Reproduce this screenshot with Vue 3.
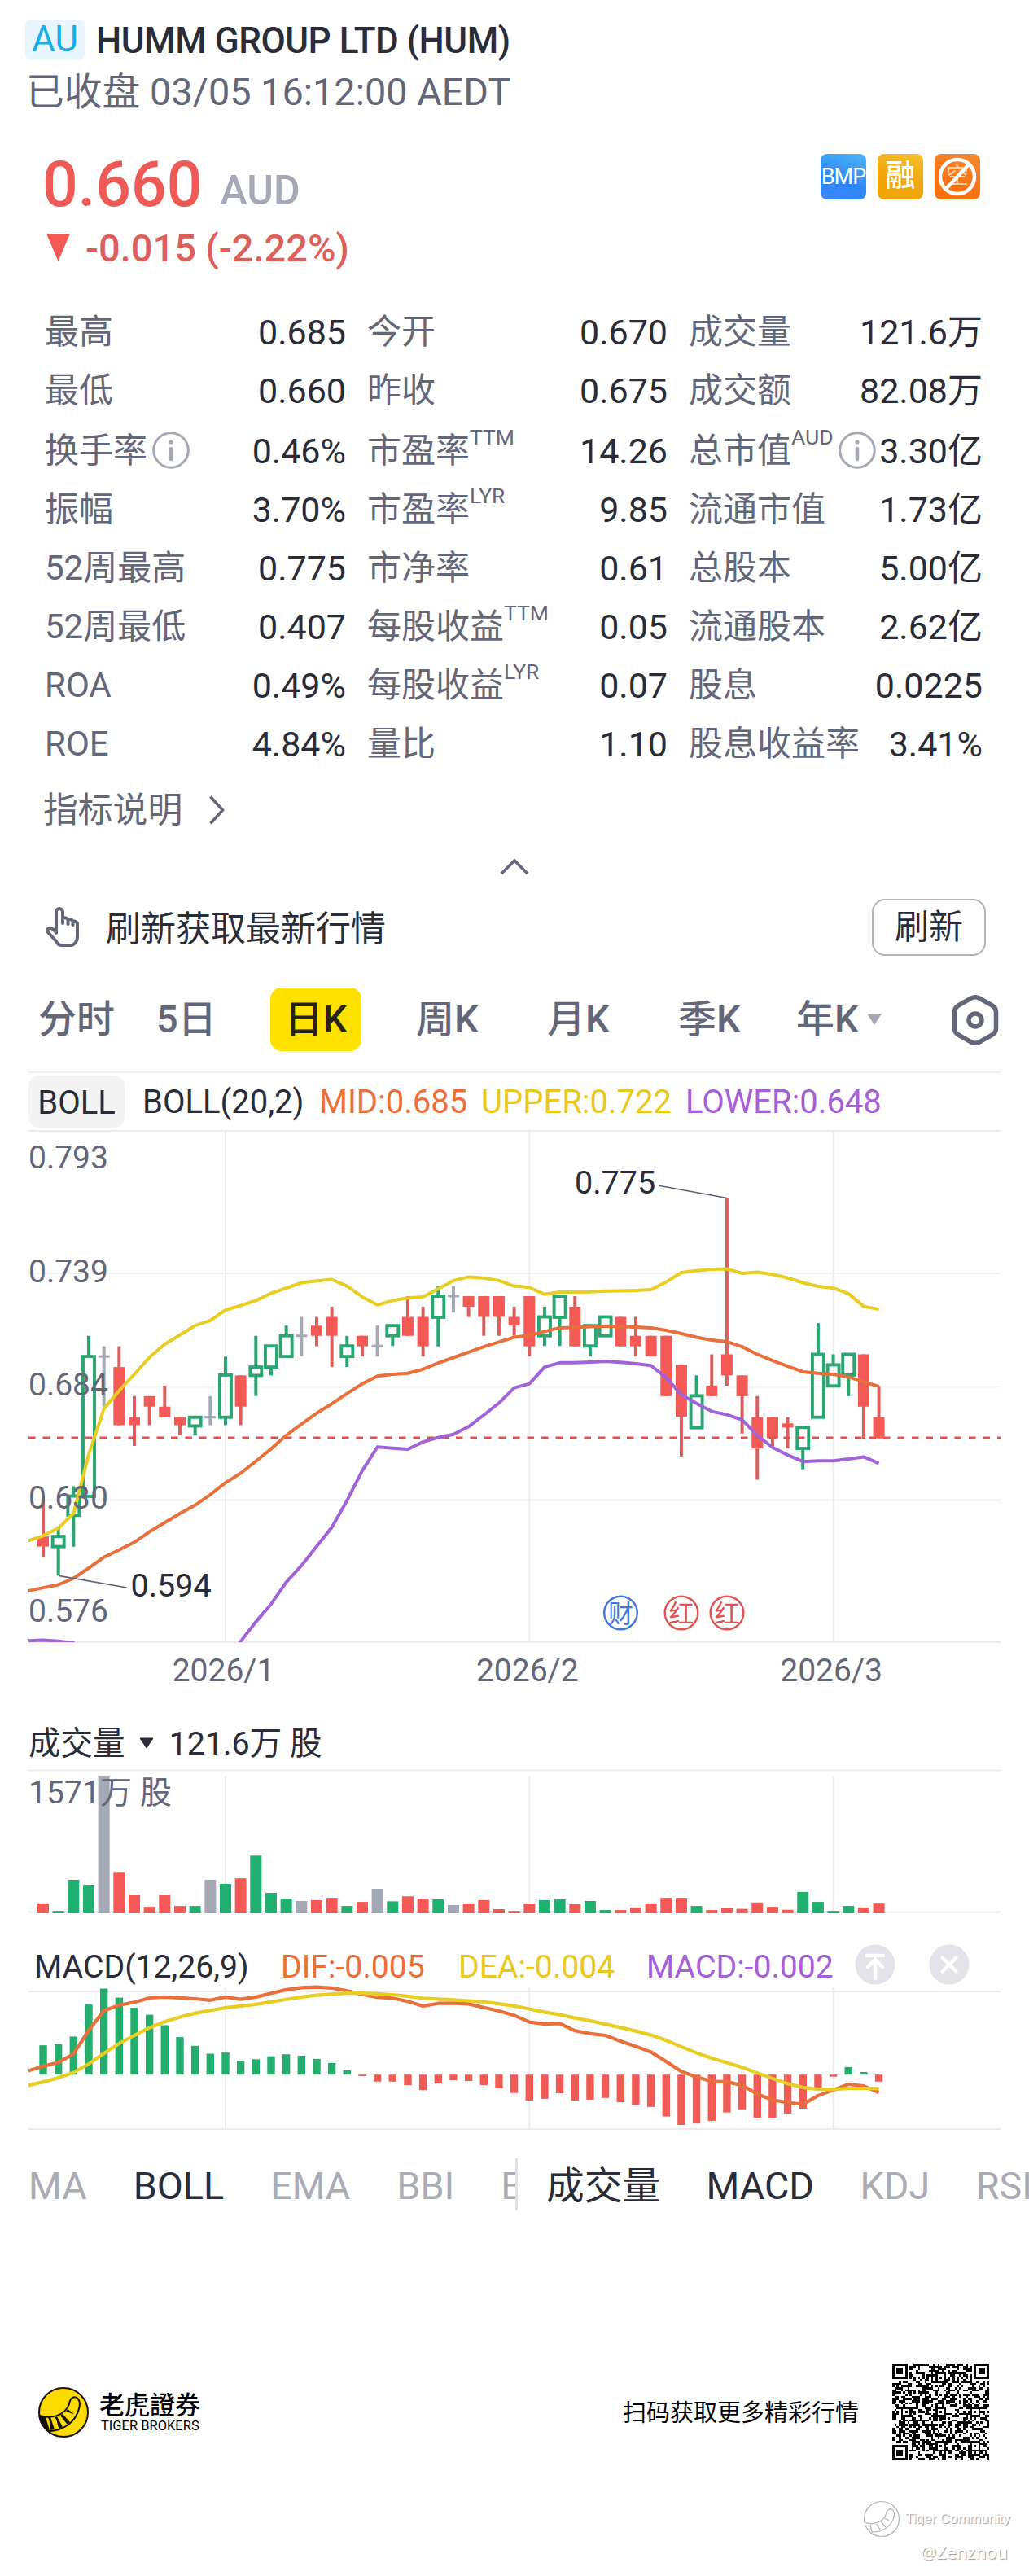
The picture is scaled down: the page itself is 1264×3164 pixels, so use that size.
<script setup>
const stats = [
  [['最高', '0.685'], ['今开', '0.670'], ['成交量', '121.6万']],
  [['最低', '0.660'], ['昨收', '0.675'], ['成交额', '82.08万']],
  [['换手率', '0.46%', '', true], ['市盈率', '14.26', 'TTM'], ['总市值', '3.30亿', 'AUD', true]],
  [['振幅', '3.70%'], ['市盈率', '9.85', 'LYR'], ['流通市值', '1.73亿']],
  [['52周最高', '0.775'], ['市净率', '0.61'], ['总股本', '5.00亿']],
  [['52周最低', '0.407'], ['每股收益', '0.05', 'TTM'], ['流通股本', '2.62亿']],
  [['ROA', '0.49%'], ['每股收益', '0.07', 'LYR'], ['股息', '0.0225']],
  [['ROE', '4.84%'], ['量比', '1.10'], ['股息收益率', '3.41%']],
]

const STEP = 18.665
const bx = (i) => 53 + STEP * i
const COLORS = { r: '#f45a55', g: '#28a870', n: '#a5a8b5' }
const months = [[12, '2026/1'], [32, '2026/2'], [52, '2026/3']]

/* kind, high, body top, body bottom, low */
const candles = `r 1025 1136 1164 1192|g 1108 1136 1164 1244|g 998 1025 1078 1164|g 584 641 1026 1026|n 613 641 641 779|r 613 670 830 830|r 750 808 830 887|r 750 750 779 830|r 721 779 808 808|r 808 808 830 858|g 808 808 832 858|n 750 808 808 830|g 641 692 808 830|r 693 693 779 830|g 584 670 693 750|g 612 612 670 693|g 556 584 641 641|n 532 584 584 641|r 532 556 584 613|r 504 532 584 670|g 584 612 641 670|r 584 584 613 641|n 556 612 612 641|g 556 556 584 612|r 475 532 584 584|r 504 532 613 641|g 447 475 533 613|n 447 475 475 520|r 475 475 504 532|r 475 475 532 584|r 475 475 532 584|r 504 532 556 584|r 475 475 613 641|g 504 532 584 612|g 475 475 533 612|r 475 504 613 613|g 556 556 612 641|g 532 532 584 584|r 532 532 613 613|r 532 584 613 641|r 584 584 641 641|r 584 584 750 750|r 664 664 807 916|g 693 749 837 837|r 635 721 750 750|r 205 635 693 721|r 693 693 750 853|r 750 808 894 980|r 808 808 866 888|r 808 825 836 894|g 836 836 894 951|g 549 635 808 808|g 635 664 722 722|g 635 635 692 750|r 635 635 779 867|r 722 808 866 866`
  .split('|')
  .map((row, i) => {
    const [k, ...v] = row.split(' ')
    const [h, t, b, l] = v.map((n) => 1380 + n / 2.24)
    return { k, h, t, b, l, x: bx(i), c: COLORS[k] }
  })

const line = (values, top, scale) =>
  values.split(' ').map((v, i) => `${bx(i - 1).toFixed(1)},${(top + v / scale).toFixed(1)}`).join(' ')

const upper = line('1148 1134 1113 1073 910 785 735 690 643 607 582 556 542 513 501 487 467 453 438 433 429 447 477 499 487 480 477 455 432 422 425 432 447 451 470 464 464 463 461 460 459 457 436 410 405 401 400 412 409 415 425 438 448 453 468 503 511', 1380, 2.24)
const mid = line('1286 1277 1269 1251 1223 1193 1173 1152 1123 1098 1073 1050 1021 988 962 929 895 858 827 797 771 743 716 695 690 687 676 659 644 629 614 601 588 583 572 562 561 559 557 559 560 562 569 578 588 596 600 614 635 652 668 683 687 690 697 711 723', 1380, 2.24)
const lower = line('1423 1421 1424 1429 1460 1520 1560 1600 1620 1630 1630 1610 1560 1480 1425 1371 1322 1262 1216 1163 1111 1037 955 890 893 896 876 864 855 834 802 769 727 716 670 658 658 656 654 657 661 666 699 746 770 792 801 815 858 891 912 930 928 928 923 917 935', 1380, 2.24)
const dif = line('1270 1254 1241 1212 1130 1063 1044 1034 1019 1016 1019 1022 1027 1016 1024 1016 1003 991 984 982 985 995 1007 1017 1020 1031 1047 1038 1037 1040 1052 1064 1079 1102 1109 1107 1132 1142 1148 1168 1186 1205 1238 1272 1291 1306 1308 1319 1350 1370 1379 1385 1355 1336 1316 1322 1344', 2090, 2.8)
const dea = line('1320 1308 1294 1276 1246 1210 1176 1148 1122 1101 1085 1072 1062 1053 1047 1041 1033 1024 1016 1010 1006 1003 1003 1005 1008 1013 1020 1023 1026 1029 1033 1039 1047 1057 1068 1077 1088 1098 1109 1121 1133 1147 1165 1187 1208 1226 1242 1258 1277 1296 1314 1327 1333 1334 1330 1330 1331', 2090, 2.8)

const volumes = '694 720 613 630 258 586 665 706 665 703 703 613 627 608 530 658 678 686 683 675 703 689 644 687 670 678 680 700 694 683 714 720 695 683 680 697 686 717 717 708 694 675 675 703 717 711 713 691 706 716 655 689 720 703 708 692'
  .split(' ')
  .map((v, i) => ({ x: bx(i) - 7, y: 2090 + v / 2.8, h: (728 - v) / 2.8, c: candles[i].k === 'g' ? '#20b06f' : candles[i].c }))

const hist = '1182 1178 1152 1042 987 1018 1053 1077 1113 1154 1184 1211 1207 1235 1230 1220 1213 1218 1229 1243 1268 1288 1307 1307 1319 1336 1313 1302 1305 1319 1330 1346 1372 1366 1347 1372 1369 1363 1378 1386 1394 1427 1456 1451 1442 1413 1405 1431 1431 1417 1400 1327 1290 1257 1274 1307'
  .split(' ')
  .map((v, i) => {
    const up = v < 1283
    return { x: bx(i) - 4.7, y: 2090 + Math.min(v, 1283) / 2.8, h: Math.abs(v - 1283) / 2.8, c: up ? '#24ae6e' : '#f05b56' }
  })

/* QR grid: finder, alignment and timing patterns around the data cells */
const N = 45
const cells = []
let seed = 90210
const rand = () => {
  seed = (seed * 1103515245 + 12345) % 2147483648
  return seed / 2147483648
}
const ring = (r, c, cr, cc) => Math.max(Math.abs(r - cr), Math.abs(c - cc))
for (let r = 0; r < N; r++) {
  for (let c = 0; c < N; c++) {
    let on = rand() < 0.52
    if (r === 6 || c === 6) on = (r + c) % 2 === 0
    for (const [ar, ac] of [[6, 22], [22, 6], [22, 22], [22, 38], [38, 22], [38, 38]]) {
      const d = ring(r, c, ar, ac)
      if (d <= 2) on = d !== 1
    }
    for (const [fr, fc] of [[3, 3], [3, 41], [41, 3]]) {
      const d = ring(r, c, fr, fc)
      if (d <= 4) on = d !== 2 && d !== 4
    }
    if (on) cells.push(`M${c} ${r}h1v1h-1z`)
  }
}
const qr = cells.join('')
</script>

<template>
  <main class="page">
    <header class="head">
      <div class="name"><span class="region">AU</span><b>HUMM GROUP LTD (HUM)</b></div>
      <div class="time">已收盘 03/05 16:12:00 AEDT</div>
    </header>

    <section class="quote">
      <div class="price-row">
        <span class="price">0.660</span><span class="cur">AUD</span>
        <div class="tags">
          <span class="tag bmp">BMP</span>
          <span class="tag margin">融</span>
          <span class="tag short">空
            <svg viewBox="0 0 56 56"><circle cx="28" cy="28" r="21" /><path d="M14 43L42 13" /></svg>
          </span>
        </div>
      </div>
      <div class="change">
        <svg width="29" height="34" viewBox="0 0 29 34"><path d="M0 0H29L14.5 34Z" fill="#f45a55" /></svg>
        <span>-0.015 (-2.22%)</span>
      </div>
    </section>

    <section class="stats">
      <div v-for="(row, r) in stats" :key="r" class="srow" :class="{ gap: r === 2 }">
        <div v-for="(s, c) in row" :key="c" class="stat">
          <span class="lab">{{ s[0] }}</span><sup v-if="s[2]">{{ s[2] }}</sup>
          <svg v-if="s[3]" class="info" width="46" height="46" viewBox="0 0 46 46">
            <circle cx="23" cy="23" r="21.3" fill="none" stroke="#a5a8b5" stroke-width="3" />
            <circle cx="23" cy="13" r="2.6" fill="#a5a8b5" />
            <path d="M23 21V34" stroke="#a5a8b5" stroke-width="4.5" stroke-linecap="round" />
          </svg>
          <span class="val">{{ s[1] }}</span>
        </div>
      </div>
    </section>

    <div class="explain">
      <span>指标说明</span>
      <svg width="21" height="38" viewBox="0 0 21 38"><path d="M2.5 2.5L17.5 19L2.5 35.5" /></svg>
    </div>
    <div class="fold"><svg width="38" height="22" viewBox="0 0 38 22"><path d="M3 19L19 3L35 19" /></svg></div>

    <div class="refresh">
      <svg width="44" height="52" viewBox="0 0 44 52">
        <path d="M14 33V7a4 4 0 0 1 8 0V21M22 14.500c4-1 6.500.5 6.500 3V22M28.500 16.500c4-1 6 .5 6 3V23M34.500 18.500c3.500-.5 5.500 1 5.500 4V37c0 7-4 11-8 11H20c-3 0-5-2.500-6-5L3.500 31.500c-1-3 1.500-5.500 4.500-4.500 2.500 1 4 3 6 5.500" />
      </svg>
      <span>刷新获取最新行情</span>
      <button>刷新</button>
    </div>

    <nav class="periods">
      <span class="p1">分时</span><span class="p2">5日</span><span class="p3">日K</span><span class="p4">周K</span><span class="p5">月K</span><span class="p6">季K</span><span class="p7">年K</span>
      <svg class="drop" width="20" height="14" viewBox="0 0 20 14"><path d="M1 0H19L10 14Z" fill="#a5a8b5" /></svg>
      <svg class="hex" width="58" height="62" viewBox="0 0 58 62">
        <path d="M24 4Q29 1.500 34 4L49 12.500Q54.500 15.500 54.500 21V41Q54.500 46.500 49 49.500L34 58Q29 60.500 24 58L9 49.500Q3.500 46.500 3.500 41V21Q3.500 15.500 9 12.500Z" />
        <circle cx="29" cy="31" r="8" />
      </svg>
    </nav>

    <div class="boll">
      <span class="chip">BOLL</span><span class="bp">BOLL(20,2)</span><span class="o">MID:0.685</span><span class="y">UPPER:0.722</span><span class="v">LOWER:0.648</span>
    </div>

    <svg class="chart" width="1264" height="719" viewBox="0 1387 1264 719">
      <defs>
        <clipPath id="plot"><rect x="35" y="1389" width="1194" height="628" /></clipPath>
      </defs>
      <g class="grid">
        <path d="M35 1389H1229M35 2017H1229" stroke-width="2" />
        <path d="M35 1564H1229M35 1703.500H1229M35 1842.500H1229" stroke-width="1.300" />
        <path v-for="m in months" :key="m[0]" :d="`M${bx(m[0])} 1389V2017`" stroke-width="1.600" />
      </g>
      <g v-for="(k, i) in candles" :key="i">
        <template v-if="k.k === 'g'">
          <path :d="`M${k.x} ${k.h}V${k.t}M${k.x} ${k.b}V${k.l}`" :stroke="k.c" stroke-width="4" />
          <rect :x="k.x - 7" :y="k.t" width="14" :height="k.b - k.t" fill="none" :stroke="k.c" stroke-width="3.900" />
        </template>
        <template v-else>
          <path :d="`M${k.x} ${k.h}V${k.l}`" :stroke="k.k === 'r' ? '#d9605f' : k.c" stroke-width="4" />
          <rect :x="k.x - 7" :y="k.k === 'n' ? k.t - 1.500 : k.t" width="14" :height="k.k === 'n' ? 3 : k.b - k.t" :fill="k.c" />
        </template>
      </g>
      <path d="M35 1766.200H1229" stroke="#e05252" stroke-width="3.400" stroke-dasharray="8.500 9" />
      <g clip-path="url(#plot)" fill="none" stroke-width="4" stroke-linejoin="round">
        <polyline :points="mid" stroke="#e9703a" />
        <polyline :points="upper" stroke="#e8cd22" />
        <polyline :points="lower" stroke="#a063d8" />
      </g>
      <path d="M72 1935.400L155.500 1950M809.300 1456.300L893 1471.500" stroke="#5f6272" stroke-width="1.600" />
      <g class="axis">
        <text x="35" y="1435">0.793</text>
        <text x="35" y="1574.500">0.739</text>
        <text x="35" y="1713.500">0.684</text>
        <text x="35" y="1853">0.630</text>
        <text x="35" y="1992">0.576</text>
        <text v-for="m in months" :key="m[1]" :x="bx(m[0]) - 2.500" y="2065" text-anchor="middle">{{ m[1] }}</text>
      </g>
      <text class="mark" x="160.500" y="1961">0.594</text>
      <text class="mark" x="706" y="1466">0.775</text>
      <g class="event" fill="#4478d6" stroke="#4478d6"><circle cx="762.500" cy="1981" r="20.300" /><text x="762.500" y="1992.500">财</text></g>
      <g v-for="x in [837, 893]" :key="x" class="event" fill="#de5454" stroke="#de5454"><circle :cx="x" cy="1981" r="20.300" /><text :x="x" y="1992.500">红</text></g>
    </svg>

    <div class="vol-head">
      <span>成交量</span><svg width="18" height="14" viewBox="0 0 18 14"><path d="M1 1H17L9 13Z" fill="#2a2c37" stroke="#2a2c37" stroke-linejoin="round" /></svg><span>121.6万 股</span>
    </div>
    <svg class="chart" width="1264" height="182" viewBox="0 2172 1264 182">
      <g class="grid">
        <path d="M35 2174.500H1229" stroke-width="1.500" />
        <path d="M35 2348.500H1229" stroke-width="2" />
        <path v-for="m in months" :key="m[0]" :d="`M${bx(m[0])} 2182V2350`" stroke-width="1.600" />
      </g>
      <rect v-for="(b, i) in volumes" :key="i" :x="b.x" :y="b.y" width="14" :height="b.h" :fill="b.c" />
      <text class="axis" x="35" y="2214.500" textLength="176">1571万 股</text>
    </svg>

    <div class="macd-head">
      <span class="m1">MACD(12,26,9)</span><span class="m2 o">DIF:-0.005</span><span class="m3 y">DEA:-0.004</span><span class="m4 v">MACD:-0.002</span>
      <svg class="c1" width="50" height="50" viewBox="0 0 50 50"><circle cx="25" cy="25" r="24.500" fill="#e3e3e9" /><path d="M15 14H35M25 42V19M16 28L25 19L34 28" /></svg>
      <svg class="c2" width="50" height="50" viewBox="0 0 50 50"><circle cx="25" cy="25" r="24.500" fill="#e3e3e9" /><path d="M16.500 16.500L33.500 33.500M33.500 16.500L16.500 33.500" /></svg>
    </div>
    <svg class="chart" width="1264" height="182" viewBox="0 2438 1264 182">
      <defs><clipPath id="osc"><rect x="35" y="2438" width="1194" height="180" /></clipPath></defs>
      <g class="grid">
        <path d="M35 2446H1229M35 2615H1229" stroke-width="2" />
        <path v-for="m in months" :key="m[0]" :d="`M${bx(m[0])} 2441.500V2615`" stroke-width="1.600" />
      </g>
      <rect v-for="(b, i) in hist" :key="i" :x="b.x" :y="b.y" width="9.400" :height="b.h" :fill="b.c" />
      <g clip-path="url(#osc)" fill="none" stroke-width="4.200" stroke-linejoin="round">
        <polyline :points="dif" stroke="#e9703a" />
        <polyline :points="dea" stroke="#e8cd22" />
      </g>
    </svg>

    <nav class="inds">
      <div class="left"><span>MA</span><span class="on">BOLL</span><span>EMA</span><span>BBI</span><span>E</span></div>
      <div class="right"><span class="on">成交量</span><span class="on">MACD</span><span>KDJ</span><span>RSI</span></div>
    </nav>

    <footer class="foot">
      <svg width="64" height="64" viewBox="0 0 64 64">
        <circle cx="32" cy="32" r="30" fill="#fcdc00" stroke="#15110a" stroke-width="2" />
        <path d="M2.500 36C16 40 33 37 39 22C40 13 46 12 49 14.500C56 21 49 39 38 47C30 53 21 55 14 55C6 49 3 43 2.500 36Z" fill="#fcdc00" stroke="#15110a" stroke-width="2" stroke-linejoin="round" />
        <path d="M3 36L10 38L15 54L12 53C6 48 3 43 3 36ZM16 38L21 53L16 54C14 48 16 44 13 38ZM24 37L31 50L27 52C24 48 25 42 21 38ZM31 34L40 44L37 47C33 43 31 39 28 36ZM37 28L45 34C41 34 38 31 35 31Z" fill="#15110a" />
      </svg>
      <div class="brand"><b>老虎證券</b><span>TIGER BROKERS</span></div>
      <span class="scan">扫码获取更多精彩行情</span>
      <svg class="qr" width="119" height="119" viewBox="0 0 45 45" shape-rendering="crispEdges"><path :d="qr" /></svg>
    </footer>

    <div class="wm">
      <svg width="46" height="46" viewBox="0 0 46 46" fill="none" stroke="#b4b4b4" stroke-width="1.200">
        <circle cx="23" cy="23" r="21.500" />
        <path d="M2 27C12 31 25 27 28 18C29 11 34 9 37 12C41 18 36 30 27 35C22 38 17 39 11 39L9 30M17 29L21 36M22 26L28 33M27 22L32 25" />
      </svg>
      <span>Tiger Community</span>
    </div>
    <div class="user">@Zenzhou</div>
  </main>
</template>

<style>
body { background: #fefefe; }
</style>

<style scoped>
.page { width: 1264px; height: 3164px; overflow: hidden; box-sizing: border-box; background: #fefefe; font-family: Roboto, "Noto Sans CJK SC", sans-serif; color: #2a2c37; white-space: nowrap; display: flex; flex-direction: column; }
.page > * { flex: none; }
.page svg { display: block; flex: none; }
.head { height: 185px; padding: 24px 0 0 31px; box-sizing: border-box; }
.name { display: flex; align-items: center; height: 49px; font-size: 44px; }
.name b { font-weight: 500; margin: 4px 0 0 14px; line-height: 49px; letter-spacing: -0.45px; }
.region { width: 73px; height: 49px; line-height: 48px; border-radius: 7px; background: #e8f6fd; color: #19aee8; text-align: center; }
.time { height: 60px; line-height: 60px; margin: 10px 0 0 1px; font-size: 46.800px; color: #646778; }
.quote { padding: 4px 60px 0 52px; height: 187px; box-sizing: border-box; }
.price-row { display: flex; height: 76px; }
.price { font-size: 77px; font-weight: 500; line-height: 77px; color: #ee5a56; }
.cur { font-size: 50px; line-height: 77px; margin: 7px 0 0 22px; color: #a5a8b5; font-weight: 500; }
.tags { margin-left: auto; display: flex; gap: 14px; }
.tag { width: 56px; height: 56px; border-radius: 8px; color: #fff; text-align: center; line-height: 56px; box-sizing: border-box; font-weight: 500; }
.bmp { background: linear-gradient(20deg, #3d86ff, #2e86f6 40%, #4cb6f9); font-size: 27px; letter-spacing: -1px; font-weight: 400; }
.margin { background: linear-gradient(20deg, #f0a400, #f0a812 50%, #f5c22c); font-size: 37px; }
.short { background: linear-gradient(200deg, #f28a34, #f97316 60%, #fb6f0a); font-size: 28px; color: #ffd0a4; position: relative; font-weight: 400; }
.short svg { position: absolute; inset: 0; fill: none; stroke: #fff; stroke-width: 4.500; }
.change { height: 60px; margin: 10px 0 0 5px; display: flex; align-items: center; font-size: 47px; font-weight: 500; color: #dd5f5b; gap: 19px; line-height: 60px; }
.change svg { margin-top: -3px; }
.stats { font-size: 43px; }
.srow { display: grid; grid-template-columns: 370px 369px 361px; column-gap: 26px; height: 72px; padding-left: 55px; }
.srow.gap { margin-top: 2px; }
.stat { display: flex; align-items: center; line-height: 72px; }
.lab { color: #646778; font-size: 42px; }
.stat sup { font-size: 26.500px; color: #646778; line-height: 30px; align-self: flex-start; margin-top: 4px; vertical-align: baseline; }
.info { margin-left: 6px; margin-top: -2px; }
.val { margin-left: auto; }
.explain { height: 60px; margin: 15px 0 0 53px; display: flex; align-items: center; font-size: 42.800px; line-height: 60px; color: #646778; gap: 32px; }
.explain svg, .fold svg { fill: none; stroke: #646778; stroke-width: 3.600; }
.fold { display: flex; justify-content: center; margin-top: 29px; height: 50px; }
.refresh { height: 70px; display: flex; align-items: center; padding: 0 53px 0 55px; font-size: 43px; line-height: 70px; }
.refresh svg { fill: none; stroke: #646778; stroke-width: 4; stroke-linecap: round; stroke-linejoin: round; }
.refresh span { margin: 3px 0 0 31px; }
.refresh button { margin-left: auto; width: 140px; height: 70px; box-sizing: border-box; border: 2px solid #b4b4b6; border-radius: 16px; background: none; font: inherit; font-size: 42px; line-height: 64px; color: inherit; padding: 0; }
.periods { display: flex; align-items: center; height: 78px; margin-top: 39px; padding-left: 47px; font-size: 47px; font-weight: 500; color: #646778; line-height: 78px; }
.periods span { flex: none; }
.p1 { width: 145px; }
.p2 { width: 140px; }
.p3 { width: 112px; height: 78px; background: #ffe100; border-radius: 14px; color: #25231a; text-align: center; }
.p4 { width: 161px; margin-left: 67px; }
.p5 { width: 161px; }
.p6 { width: 145px; }
.p7 { width: 86px; }
.hex { margin-left: 85px; margin-top: 2px; fill: none; stroke: #646778; stroke-width: 5.500; }
.boll { display: flex; align-items: center; margin: 25px 0 0 35px; width: 1194px; height: 71px; box-sizing: border-box; border-top: 2px solid #f0f0f2; font-size: 40px; line-height: 72px; }
.boll > span { padding-top: 2px; box-sizing: border-box; }
.chip { width: 118px; height: 64px; line-height: 64px; background: #f4f4f5; border-radius: 13px; text-align: center; }
.bp { width: 217px; margin-left: 22px; }
.boll .o { width: 199px; }
.boll .y { width: 251px; }
.o { color: #ea7038; }
.y { color: #e9c91e; }
.v { color: #a560d8; }
.grid { stroke: #ebebed; fill: none; }
.axis { font-size: 39px; fill: #646778; }
.mark { font-size: 39.500px; fill: #2a2c37; }
.event circle { fill: none; stroke-width: 2.400; }
.event text { font-size: 31px; text-anchor: middle; stroke: none; }
.vol-head { display: flex; align-items: center; height: 66px; padding: 6px 0 0 35px; box-sizing: border-box; font-size: 39.500px; line-height: 60px; }
.vol-head svg { margin: -3px 19px 0 17px; }
.macd-head { display: flex; align-items: center; height: 54px; margin-top: 30px; padding: 10px 0 0 42px; box-sizing: border-box; font-size: 39.200px; line-height: 44px; }
.m1 { width: 303px; }
.m2 { width: 218px; }
.m3 { width: 231px; }
.m4 { width: 256px; }
.macd-head path { fill: none; stroke: #fff; stroke-width: 4.500; stroke-linecap: round; }
.macd-head svg { margin-top: -6px; }
.c2 { margin-left: 41px; }
.inds { display: flex; height: 64px; margin-top: 31px; font-size: 46.700px; line-height: 69px; color: #a9abb5; }
.inds .on { color: #2a2c37; }
.inds span { flex: none; }
.left { width: 636px; border-right: 3px solid #e2e2e6; overflow: hidden; display: flex; gap: 57px; padding-left: 35px; box-sizing: border-box; }
.right { width: 628px; overflow: hidden; display: flex; gap: 56.500px; padding-left: 35px; box-sizing: border-box; }
.foot { display: flex; margin-top: 188px; height: 119px; padding-left: 46px; align-items: center; color: #000; }
.brand { margin-left: 12px; display: flex; flex-direction: column; width: 131px; }
.brand b { font: 500 31px/33px "Noto Sans CJK TC", sans-serif; }
.brand span { font-size: 16.500px; line-height: 23px; margin-left: 2px; }
.scan { margin: 2px 0 0 512px; font-size: 29px; line-height: 40px; }
.qr { margin-left: 41px; }
.wm { display: flex; align-items: center; height: 46px; margin: 49px 0 0 1060px; gap: 6px; font: 17px/46px "Liberation Sans", Arial, sans-serif; color: #fefefe; text-shadow: 1px 1px 1px #999; }
.user { margin: 2px 0 0 1131px; font: 21.500px/32px "Noto Sans", sans-serif; color: #fefefe; text-shadow: 1px 1px 1px #999; }
</style>
